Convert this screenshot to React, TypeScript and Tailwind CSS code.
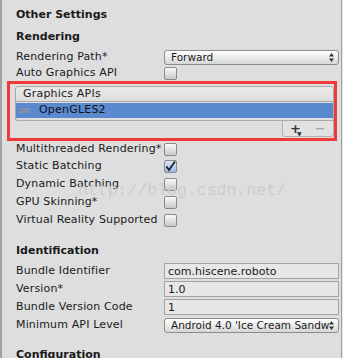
import React from "react";

const font = { fontFamily: '"DejaVu Sans", Verdana, sans-serif' };

function Checkbox({ checked = false }: { checked?: boolean }) {
  return (
    <div
      className={`w-[13px] h-[13px] rounded-[2px] border border-[#8a8a8a] relative ${
        checked ? "bg-gradient-to-b from-[#dbe6f7] to-[#9db7e3]" : "bg-gradient-to-b from-[#fbfbfb] to-[#c9c9c9]"
      }`}
    >
      {checked && (
        <svg width="13" height="13" viewBox="0 0 13 13" className="absolute -left-px -top-px">
          <path d="M2.5 6.5 L5 10 L11 1.5" fill="none" stroke="#1e1e1e" strokeWidth="1.8" />
        </svg>
      )}
    </div>
  );
}

function Arrows() {
  return (
    <svg width="5" height="9" viewBox="0 0 5 9" className="shrink-0">
      <path d="M2.5 0 L5 3.5 L0 3.5 Z M0 5.5 L5 5.5 L2.5 9 Z" fill="#333" />
    </svg>
  );
}

function Dropdown({ value }: { value: string }) {
  return (
    <div className="h-[15px] flex-1 min-w-0 flex items-center rounded-[3px] border border-[#8d8d8d] bg-gradient-to-b from-white to-[#d6d6d6] pl-[6px] pr-[4px] overflow-hidden tracking-normal">
      <span className="flex-1 min-w-0 whitespace-nowrap overflow-hidden text-[10.5px] leading-none">{value}</span>
      <Arrows />
    </div>
  );
}

function Field({ value }: { value: string }) {
  return (
    <div className="h-[16px] flex-1 min-w-0 flex items-center border border-[#a3a3a3] bg-[#e7e7e7] pl-[3px] text-[11px] leading-none tracking-normal">
      {value}
    </div>
  );
}

function Row({ label, h = "h-[18px]", children }: { label: string; h?: string; children?: React.ReactNode }) {
  return (
    <div className={`flex items-center ${h}`}>
      <div className="w-[148px] shrink-0 whitespace-nowrap tracking-[0.15px]">{label}</div>
      <div className="flex-1 min-w-0 flex items-center pr-[2px]">{children}</div>
    </div>
  );
}

export default function App() {
  return (
    <div className="w-[343px] h-[358px] overflow-hidden bg-[#e4e4e4]" style={font}>
      <div className="w-[342px] h-[358px] relative bg-[#dedede] border-l-2 border-r border-[#a2a2a2] text-[11px] text-[#1a1a1a]">
        <div className="pl-[14px] pt-[7px]">
          <div className="h-[16px] flex items-center font-bold">Other Settings</div>
          <div className="h-[16px] mt-[6px] flex items-center font-bold">Rendering</div>
          <div className="mt-[4px]">
            <Row label="Rendering Path*" h="h-[17px]">
              <Dropdown value="Forward" />
            </Row>
            <Row label="Auto Graphics API" h="h-[15px]">
              <Checkbox />
            </Row>
          </div>
        </div>

        <div className="ml-[5px] w-[330px] h-[60px] border-[3px] border-[#ee3a3a] flex flex-col tracking-[0.2px]">
          <div className="ml-[5px] mt-[2px] h-[16px] flex items-center rounded-t-[3px] border border-[#a9a9a9] bg-gradient-to-b from-[#ebebeb] to-[#dddddd] pl-[7px]">
            Graphics APIs
          </div>
          <div className="ml-[5px] h-[19px] border-x border-b border-[#a9a9a9] rounded-bl-[3px] pt-px">
            <div className="h-[15px] bg-[#5a89cf] flex items-center pl-[3px]">
              <svg width="11" height="5" viewBox="0 0 11 5" className="mr-[9px]">
                <rect x="0" y="0" width="11" height="2" fill="#2d3b55" />
                <rect x="0" y="0.5" width="11" height="1" fill="#dfe6f2" />
                <rect x="0" y="3" width="11" height="2" fill="#2d3b55" />
                <rect x="0" y="3.5" width="11" height="1" fill="#dfe6f2" />
              </svg>
              <span className="text-[#111]">OpenGLES2</span>
            </div>
          </div>
          <div className="self-end w-[52px] h-[16px] border-x border-b border-[#b0b0b0] rounded-b-[3px] bg-[#e2e2e2] flex items-center justify-around">
            <span className="relative font-bold text-[13px] leading-none text-[#333]">
              +
              <span className="absolute left-[7px] top-[9px] text-[6px]">▼</span>
            </span>
            <span className="text-[13px] leading-none text-[#9a9a9a]">−</span>
          </div>
        </div>

        <div className="pl-[14px]">
          <Row label="Multithreaded Rendering*" h="h-[17px]">
            <Checkbox />
          </Row>
          <Row label="Static Batching" h="h-[17px]">
            <Checkbox checked />
          </Row>
          <Row label="Dynamic Batching">
            <Checkbox />
          </Row>
          <Row label="GPU Skinning*">
            <Checkbox />
          </Row>
          <Row label="Virtual Reality Supported">
            <Checkbox />
          </Row>

          <div className="h-[18px] mt-[13px] flex items-center font-bold">Identification</div>
          <div className="mt-[2px]">
            <Row label="Bundle Identifier">
              <Field value="com.hiscene.roboto" />
            </Row>
            <Row label="Version*">
              <Field value="1.0" />
            </Row>
            <Row label="Bundle Version Code">
              <Field value="1" />
            </Row>
            <Row label="Minimum API Level">
              <Dropdown value="Android 4.0 'Ice Cream Sandwich' (API level 14)" />
            </Row>
          </div>
          <div className="h-[18px] mt-[12px] flex items-center font-bold">Configuration</div>
        </div>

        <div
          className="absolute left-[76px] top-[179px] text-[16.5px] text-[#cdcdcd] whitespace-nowrap pointer-events-none"
          style={{ fontFamily: '"Liberation Mono", "Courier New", monospace' }}
        >
          http://blog.csdn.net/
        </div>
      </div>
    </div>
  );
}
